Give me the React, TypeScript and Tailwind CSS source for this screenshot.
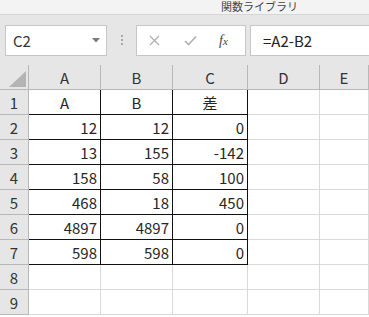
import React from 'react'

const COLS = [
  { key: 'A', w: 'w-[72px]' },
  { key: 'B', w: 'w-[72px]' },
  { key: 'C', w: 'w-[75px]' },
  { key: 'D', w: 'w-[72px]' },
  { key: 'E', w: 'flex-1' },
]

// A1:C7 — the bordered table
const DATA: (string | number)[][] = [
  ['A', 'B', '差'],
  [12, 12, 0],
  [13, 155, -142],
  [158, 58, 100],
  [468, 18, 450],
  [4897, 4897, 0],
  [598, 598, 0],
]

function Cell({ value, width, boxed }: { value?: string | number; width: string; boxed: boolean }) {
  const isNum = typeof value === 'number'
  return (
    <div
      className={[
        width,
        'h-[25px] flex items-center border-r border-b text-[15px] text-[#262626] leading-none',
        boxed ? 'border-[#111]' : 'border-[#d9d9d9]',
        isNum ? 'justify-end pr-[3px]' : 'justify-center',
      ].join(' ')}
    >
      {value ?? ''}
    </div>
  )
}

export default function App() {
  const rows = Array.from({ length: 9 }, (_, i) => i + 1)

  return (
    <div className="w-[369px] h-[317px] overflow-hidden bg-white font-['Noto_Sans_CJK_JP','Noto_Sans',sans-serif] select-none">
      {/* ribbon strip */}
      <div className="h-[15px] bg-[#f3f3f3] border-b border-[#d6d6d6] flex items-start">
        <span className="ml-[221px] text-[11px] leading-[13px] text-[#444]">関数ライブラリ</span>
      </div>

      {/* formula bar */}
      <div className="h-[50px] bg-[#e6e6e6] flex items-start pt-[10px]">
        <div className="ml-[5px] w-[102px] h-[31px] bg-white border border-[#c6c6c6] flex items-center justify-between pl-[7px] pr-[6px]">
          <span className="text-[15px] text-[#333] leading-none">C2</span>
          <svg width="8" height="5" viewBox="0 0 8 5">
            <path d="M0 0 H8 L4 4.5 Z" fill="#7a7a7a" />
          </svg>
        </div>
        <div className="ml-[14px] mt-[10px] flex flex-col gap-[2px]">
          <span className="w-[2px] h-[2px] bg-[#a8a8a8]" />
          <span className="w-[2px] h-[2px] bg-[#a8a8a8]" />
          <span className="w-[2px] h-[2px] bg-[#a8a8a8]" />
        </div>
        <div className="ml-[13px] w-[110px] h-[31px] bg-white border border-[#c6c6c6] flex items-center">
          <svg className="ml-[12px]" width="11" height="11" viewBox="0 0 11 11">
            <path d="M1 1 L10 10 M10 1 L1 10" stroke="#b0b0b0" strokeWidth="1.3" />
          </svg>
          <svg className="ml-[24px]" width="13" height="11" viewBox="0 0 13 11">
            <path d="M1 6 L4.5 9.5 L12 1.5" stroke="#b0b0b0" strokeWidth="1.6" fill="none" />
          </svg>
          <span className="ml-[22px] font-['Liberation_Serif',serif] italic text-[14px] text-[#444] leading-none">
            f<span className="text-[11px]">x</span>
          </span>
        </div>
        <div className="ml-[4px] flex-1 h-[31px] bg-white border border-r-0 border-[#c6c6c6] flex items-center pl-[12px]">
          <span className="text-[15px] text-[#222] leading-none">=A2-B2</span>
        </div>
      </div>

      {/* column headers */}
      <div className="flex h-[25px] bg-[#e6e6e6]">
        <div className="w-[29px] h-[25px] border-r border-b border-[#b8b8b8] flex items-end justify-end pr-[2px] pb-[2px]">
          <svg width="17" height="16" viewBox="0 0 17 16">
            <path d="M17 0 V16 H0 Z" fill="#b4b4b4" />
          </svg>
        </div>
        {COLS.map((c) => (
          <div
            key={c.key}
            className={`${c.w} h-[25px] border-r border-b border-[#b8b8b8] flex items-center justify-center text-[15px] text-[#333] leading-none`}
          >
            {c.key}
          </div>
        ))}
      </div>

      {/* rows */}
      {rows.map((r) => {
        const rowData = DATA[r - 1]
        return (
          <div key={r} className="flex h-[25px]">
            <div className="w-[29px] h-[25px] bg-[#e6e6e6] border-r border-b border-[#b8b8b8] flex items-center justify-center text-[15px] text-[#333] leading-none">
              {r}
            </div>
            {COLS.map((c, ci) => (
              <Cell
                key={c.key}
                width={c.w}
                value={rowData && ci < 3 ? rowData[ci] : undefined}
                boxed={!!rowData && ci < 3}
              />
            ))}
          </div>
        )
      })}
    </div>
  )
}
